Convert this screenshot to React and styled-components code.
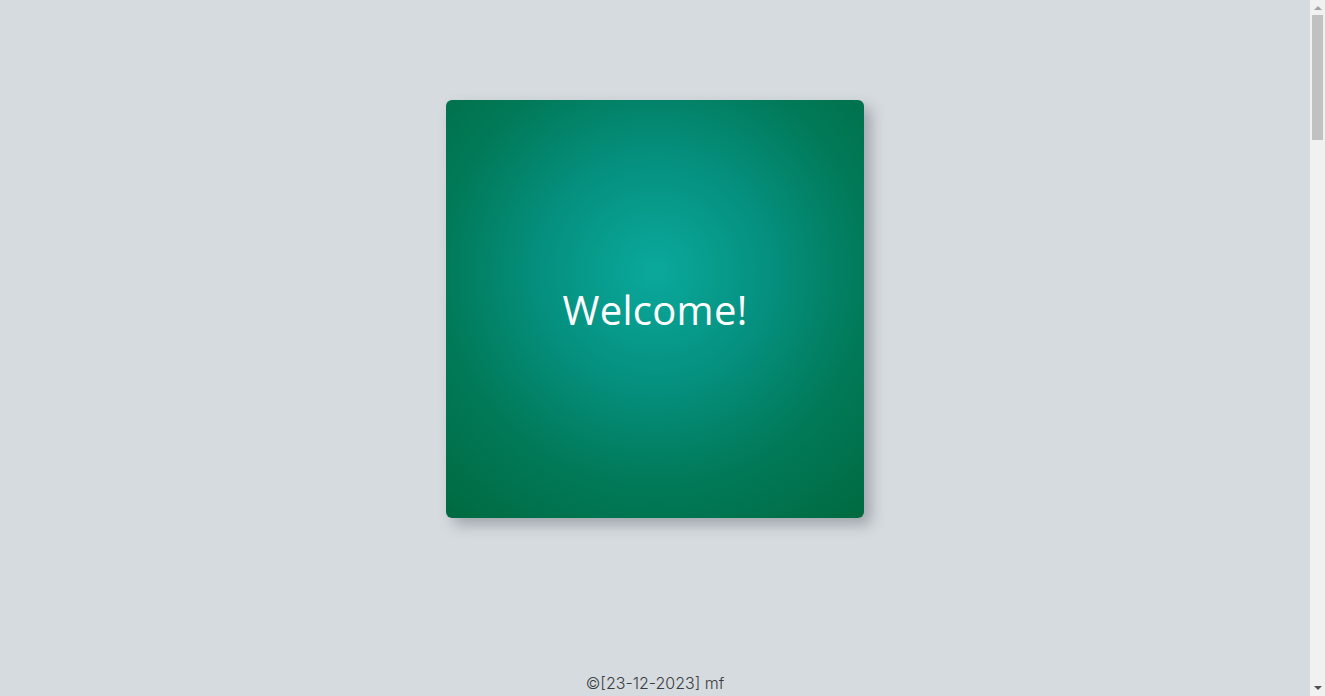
import styled, { createGlobalStyle } from "styled-components";

const GlobalStyle = createGlobalStyle`
    html, body {
        margin: 0;
        padding: 0;
        background-color: #d6dbdf;
    }
`;

const PageStyle = styled.div`
    display: flex;
    flex-direction: column;
    align-items: center;
    width: calc(100% - 15px);
    min-height: 3708px;
`;

const MainStyle = styled.main`
    display: flex;
    justify-content: center;
    padding-top: 100px;
    width: 100%;
`;

const CardStyle = styled.section`
    width: 418px;
    height: 418px;
    border-radius: 6px;
    background: radial-gradient(circle at 50% 41%, #0aa99c 0%, #05907f 35%, #017a59 65%, #006a40 100%);
    box-shadow: 7px 7px 14px rgba(60, 70, 80, 0.35);
    display: flex;
    justify-content: center;
    align-items: center;
`;

const CardTitleStyle = styled.h1`
    margin: 0;
    color: #ffffff;
    font-family: "Open Sans", "Noto Sans", sans-serif;
    font-weight: 400;
    font-size: 40px;
    letter-spacing: 0.3px;
`;

const FooterStyle = styled.footer`
    margin-top: 153px;
    color: #3a3d40;
    font-family: "Inter", "Noto Sans", sans-serif;
    font-weight: 300;
    font-size: 16px;
    line-height: 24px;
`;

/* stand-in for the browser scrollbar seen in the screenshot */
const ScrollbarStyle = styled.div`
    position: fixed;
    top: 0;
    right: 0;
    width: 15px;
    height: 100vh;
    background-color: #f1f1f1;
    display: flex;
    flex-direction: column;
    align-items: center;
`;

const ScrollArrowStyle = styled.div`
    height: 15px;
    width: 100%;
    display: flex;
    justify-content: center;
    align-items: center;
    color: ${(props) => (props.$dim ? "#a3a3a3" : "#505050")};
`;

const ScrollTrackStyle = styled.div`
    flex: 1;
    width: 100%;
`;

const ScrollThumbStyle = styled.div`
    margin: 0 2px;
    height: 125px;
    background-color: #c1c1c1;
`;

function App() {
    return (
        <>
            <GlobalStyle />
            <PageStyle>
                <MainStyle>
                    <CardStyle>
                        <CardTitleStyle>Welcome!</CardTitleStyle>
                    </CardStyle>
                </MainStyle>
                <FooterStyle>©[23-12-2023] mf</FooterStyle>
            </PageStyle>
            <ScrollbarStyle>
                <ScrollArrowStyle $dim>
                    <svg width="8" height="5" viewBox="0 0 8 5">
                        <path d="M0 5 L4 1 L8 5 Z" fill="currentColor" />
                    </svg>
                </ScrollArrowStyle>
                <ScrollTrackStyle>
                    <ScrollThumbStyle />
                </ScrollTrackStyle>
                <ScrollArrowStyle>
                    <svg width="8" height="5" viewBox="0 0 8 5">
                        <path d="M0 0 L4 4 L8 0 Z" fill="currentColor" />
                    </svg>
                </ScrollArrowStyle>
            </ScrollbarStyle>
        </>
    );
}

export default App;
